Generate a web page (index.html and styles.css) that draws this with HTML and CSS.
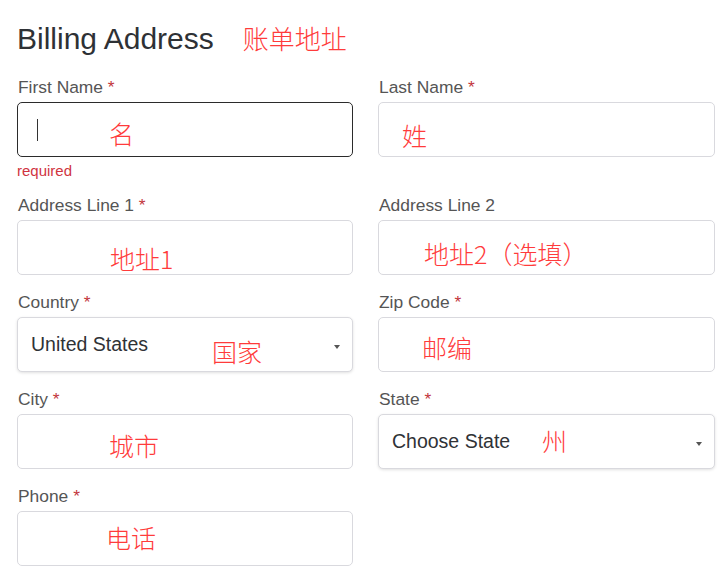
FILE: index.html
```html
<!DOCTYPE html>
<html lang="en">
<head>
<meta charset="utf-8">
<title>Billing Address</title>
<link rel="stylesheet" href="styles.css">
</head>
<body>
<div class="page">
  <h1 class="title">Billing Address<span class="note-title">账单地址</span></h1>
  <div class="grid">
    <div class="field">
      <div class="label">First Name <span class="req">*</span></div>
      <div class="box box-focus"><span class="caret"></span><span class="note n-first">名</span></div>
      <div class="error">required</div>
    </div>
    <div class="field">
      <div class="label">Last Name <span class="req">*</span></div>
      <div class="box"><span class="note n-last">姓</span></div>
    </div>

    <div class="field">
      <div class="label">Address Line 1 <span class="req">*</span></div>
      <div class="box"><span class="note n-addr1">地址1</span></div>
    </div>
    <div class="field">
      <div class="label">Address Line 2</div>
      <div class="box"><span class="note n-addr2">地址2（选填）</span></div>
    </div>

    <div class="field">
      <div class="label">Country <span class="req">*</span></div>
      <div class="box select"><span class="value">United States</span><span class="arrow"></span><span class="note n-country">国家</span></div>
    </div>
    <div class="field">
      <div class="label">Zip Code <span class="req">*</span></div>
      <div class="box"><span class="note n-zip">邮编</span></div>
    </div>

    <div class="field">
      <div class="label">City <span class="req">*</span></div>
      <div class="box"><span class="note n-city">城市</span></div>
    </div>
    <div class="field">
      <div class="label">State <span class="req">*</span></div>
      <div class="box select"><span class="value">Choose State</span><span class="arrow"></span><span class="note n-state">州</span></div>
    </div>

    <div class="field">
      <div class="label">Phone <span class="req">*</span></div>
      <div class="box"><span class="note n-phone">电话</span></div>
    </div>
  </div>
</div>
</body>
</html>
```
FILE: styles.css
```css
html, body {
  margin: 0;
  padding: 0;
  background: #ffffff;
}

body {
  font-family: "Liberation Sans", Arial, sans-serif;
  color: #333333;
}

.page {
  padding: 21px 12px 0 17px;
}

.title {
  margin: 0 0 21px 0;
  font-size: 30px;
  line-height: 34px;
  font-weight: 400;
  color: #2e3135;
}

.note-title {
  margin-left: 29px;
  font-family: "Noto Sans CJK SC", sans-serif;
  font-weight: 300;
  font-size: 26px;
  color: #ff3b3b;
}

.grid {
  display: grid;
  grid-template-columns: 336px 337px;
  column-gap: 25px;
  row-gap: 17px;
  align-items: start;
}

.field {
  display: flex;
  flex-direction: column;
}

.label {
  font-size: 17.4px;
  line-height: 20px;
  color: #555555;
  margin-left: 1px;
  margin-bottom: 5px;
}

.req {
  color: #c2343c;
}

.box {
  position: relative;
  height: 55px;
  box-sizing: border-box;
  border: 1px solid #d9d9de;
  border-radius: 5px;
  background: #ffffff;
  display: flex;
  align-items: center;
}

.box-focus {
  border-color: #2b2b2b;
}

.select {
  box-shadow: 0 1px 3px rgba(0, 0, 0, 0.12);
  padding-left: 13px;
}

.value {
  font-size: 19.5px;
  color: #2f3236;
}

.arrow {
  position: absolute;
  right: 12px;
  top: 50%;
  width: 0;
  height: 0;
  border-left: 3.5px solid transparent;
  border-right: 3.5px solid transparent;
  border-top: 4px solid #555555;
}

.caret {
  position: absolute;
  left: 19px;
  top: 16px;
  width: 1px;
  height: 22px;
  background: #333333;
}

.error {
  margin-top: 6px;
  margin-bottom: -1px;
  font-size: 15px;
  line-height: 16px;
  color: #d0343f;
}

.note {
  position: absolute;
  font-family: "Noto Sans CJK SC", sans-serif;
  font-weight: 300;
  font-size: 25px;
  line-height: 25px;
  color: #ff3b3b;
  white-space: nowrap;
}

.n-first { left: 91px; top: 18px; }
.n-last { left: 23px; top: 20px; }
.n-addr1 { left: 92px; top: 25px; }
.n-addr2 { left: 45px; top: 20px; }
.n-country { left: 194px; top: 21px; }
.n-zip { left: 43px; top: 17px; }
.n-city { left: 91px; top: 18px; }
.n-state { left: 163px; top: 13px; }
.n-phone { left: 88px; top: 13px; }
```
